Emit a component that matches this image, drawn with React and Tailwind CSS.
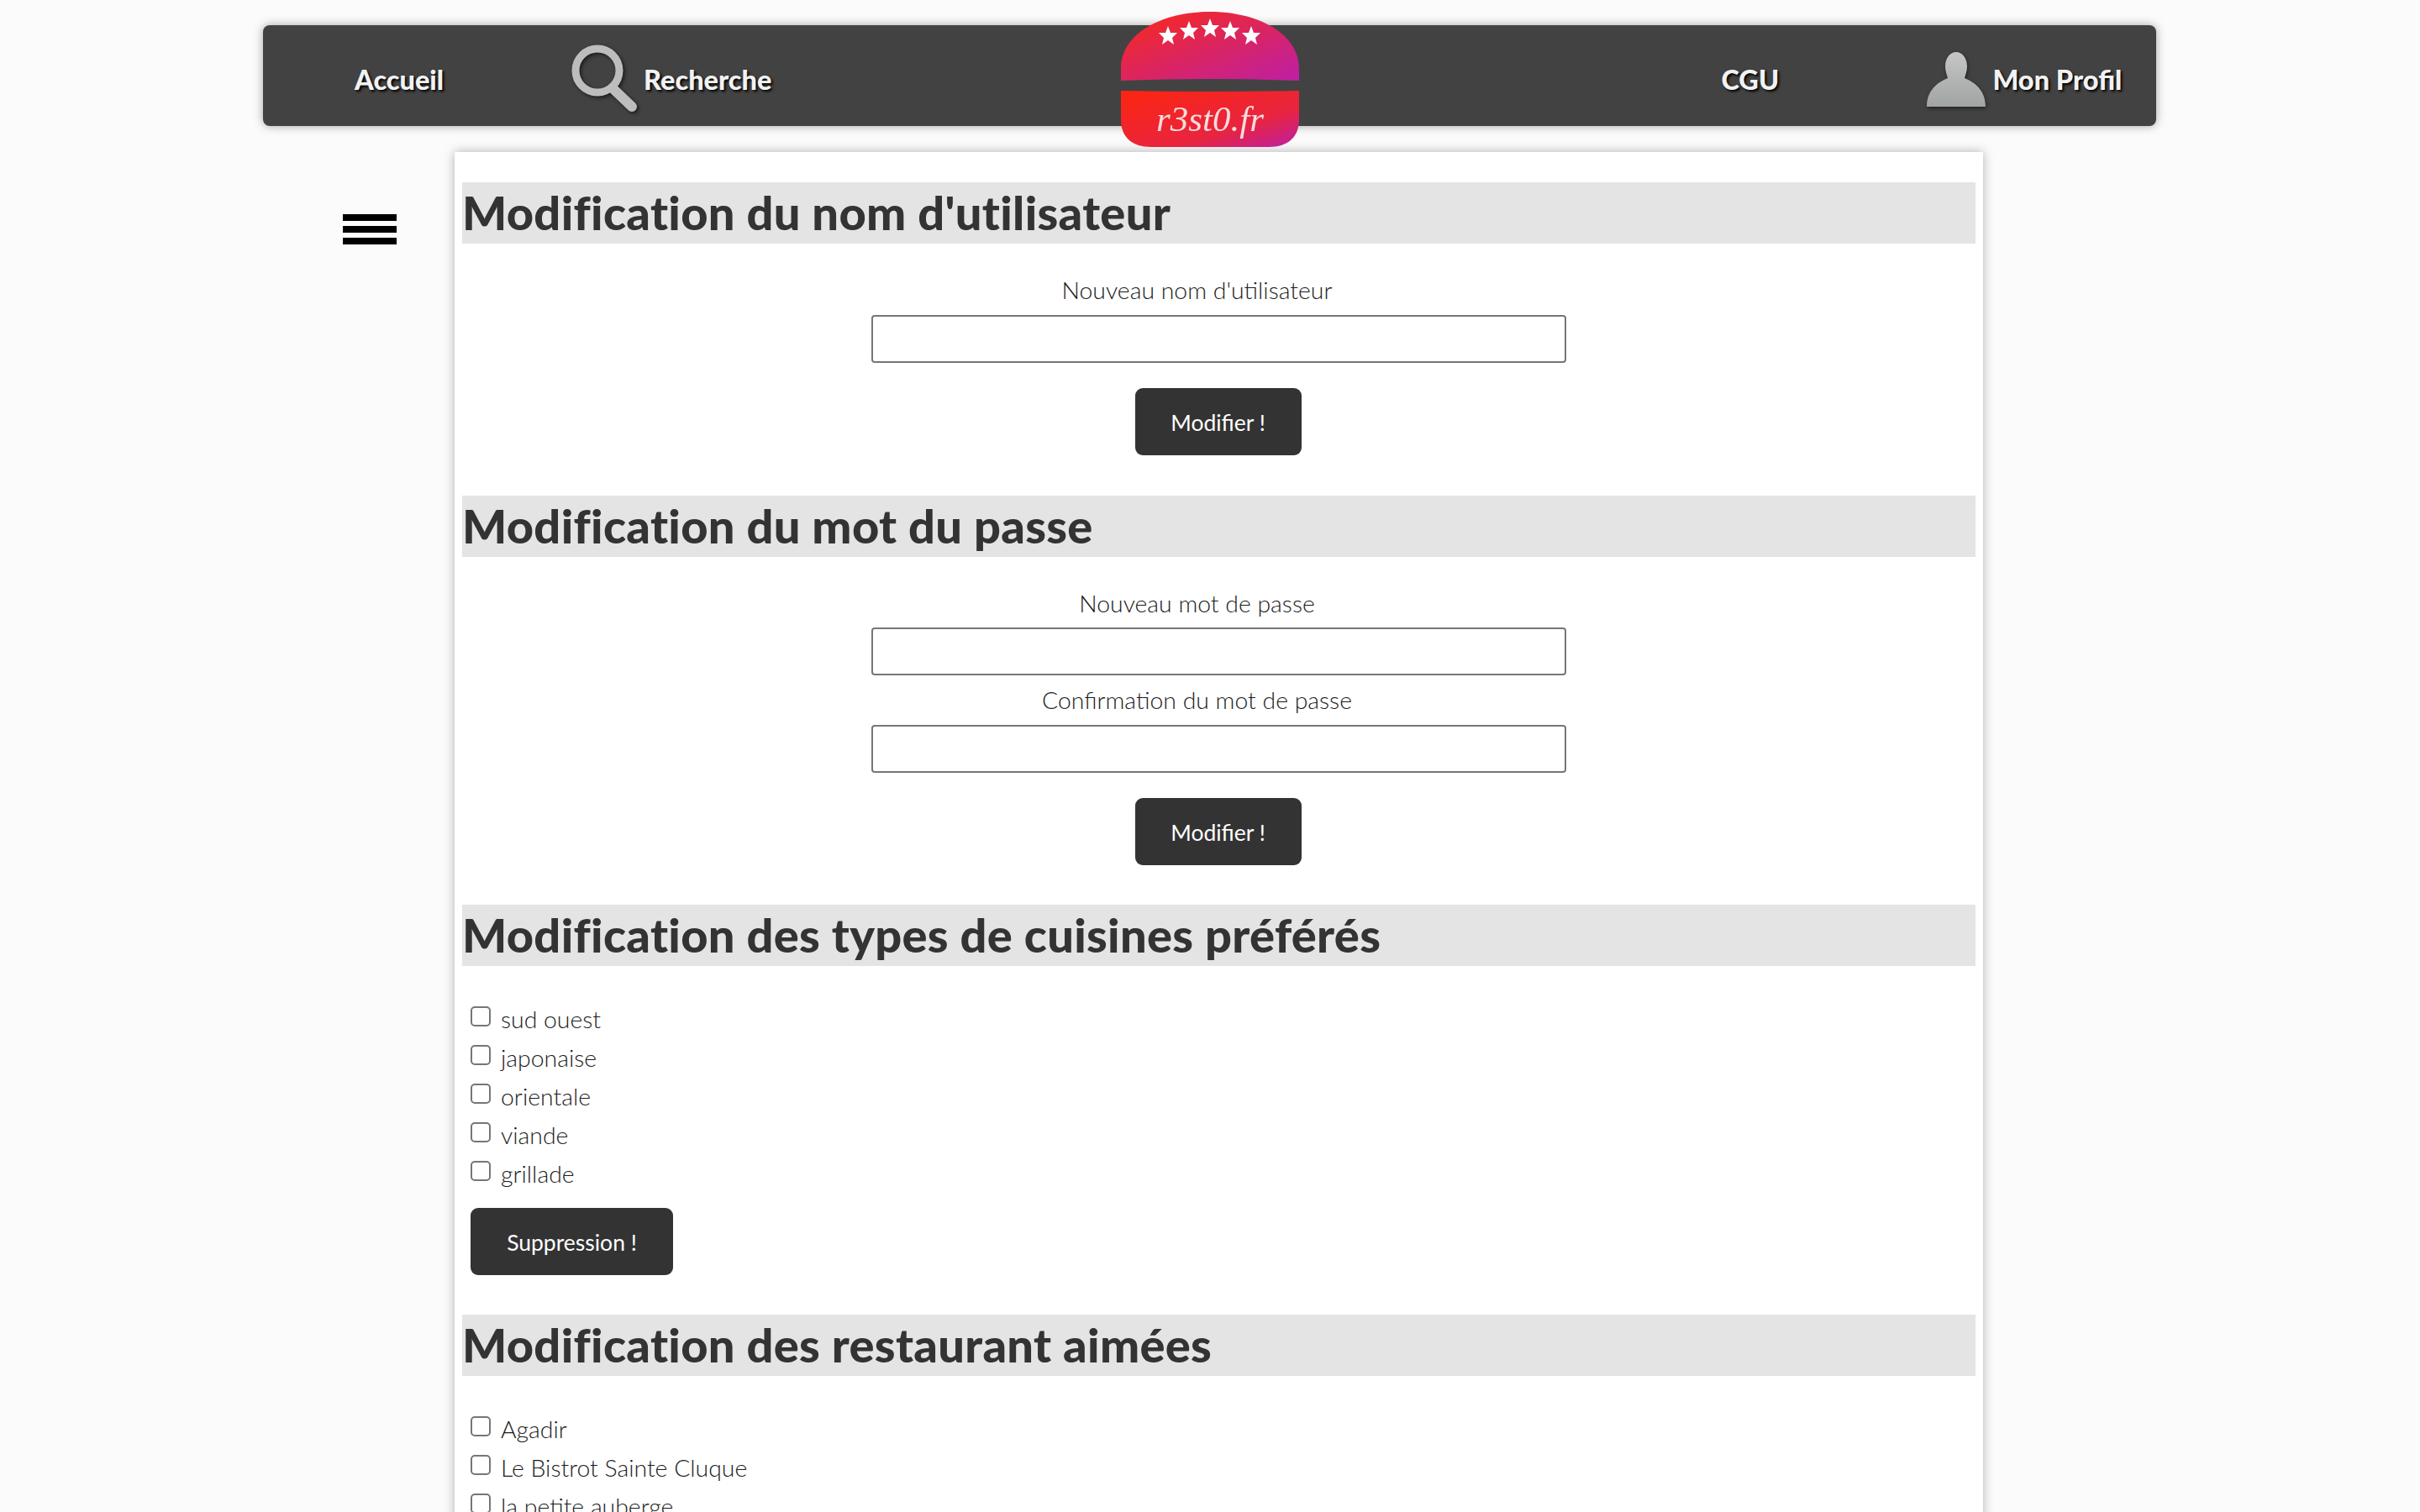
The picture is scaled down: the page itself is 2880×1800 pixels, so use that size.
const cuisines = ['sud ouest', 'japonaise', 'orientale', 'viande', 'grillade'];
const restaurants = ['Agadir', 'Le Bistrot Sainte Cluque', 'la petite auberge'];

const SearchIcon = () => (
  <svg viewBox="0 0 84 84" className="w-[84px] h-[84px] shrink-0 drop-shadow-[2px_2px_2px_rgba(0,0,0,0.6)]">
    <ellipse cx="32" cy="31" rx="26" ry="26" fill="none" stroke="#bdbdbd" strokeWidth="9" />
    <path d="M50 52 L73 74" stroke="#bdbdbd" strokeWidth="12" strokeLinecap="round" />
  </svg>
);

const PersonIcon = () => (
  <svg viewBox="0 0 70 66" className="w-[70px] h-[66px] shrink-0 drop-shadow-[1px_2px_2px_rgba(0,0,0,0.5)]">
    <defs>
      <linearGradient id="person" x1="0" y1="0" x2="0" y2="1">
        <stop offset="0" stopColor="#c6c6c6" />
        <stop offset="1" stopColor="#a0a4a2" />
      </linearGradient>
    </defs>
    <path
      d="M35 0 C43 0 48 8 48 17 C48 23 46 27 45 31 C60 37 70 48 70 65 L0 65 C0 48 10 37 25 31 C24 27 22 23 22 17 C22 8 27 0 35 0 Z"
      fill="url(#person)"
    />
  </svg>
);

const Logo = () => (
  <svg viewBox="0 0 212 161" className="absolute left-[1021px] top-[-16px] w-[212px] h-[161px] blur-[0.5px]">
    <defs>
      <linearGradient id="bun" x1="0" y1="0" x2="1" y2="1">
        <stop offset="0.05" stopColor="#f72a1e" />
        <stop offset="1" stopColor="#bd1fa5" />
      </linearGradient>
      <linearGradient id="bun2" x1="0" y1="0" x2="1" y2="1">
        <stop offset="0.05" stopColor="#fb2512" />
        <stop offset="0.65" stopColor="#e8243f" />
        <stop offset="1" stopColor="#bd1fa5" />
      </linearGradient>
    </defs>
    <path d="M0 82 L0 68 C0 25 50 0 106 0 C162 0 212 25 212 68 L212 82 Q106 78 0 82 Z" fill="url(#bun)" />
    <path d="M0 94 Q106 96 212 94 L212 128 C212 150 198 161 176 161 L36 161 C14 161 0 150 0 128 Z" fill="url(#bun2)" />
    <g fill="#ffffff">
      <polygon points="56,17 59,25 67,25 61,31 63,39 56,34 49,39 51,31 45,25 53,25" />
      <polygon points="81,11 84,19 92,19 86,25 88,33 81,28 74,33 76,25 70,19 78,19" />
      <polygon points="106,8 109,16 117,16 111,22 113,30 106,25 99,30 101,22 95,16 103,16" />
      <polygon points="130,11 133,19 141,19 135,25 137,33 130,28 123,33 125,25 119,19 127,19" />
      <polygon points="155,17 158,25 166,25 160,31 162,39 155,34 148,39 150,31 144,25 152,25" />
    </g>
    <text
      x="106"
      y="142"
      textAnchor="middle"
      fontFamily="'Liberation Serif', serif"
      fontStyle="italic"
      fontWeight="400"
      fontSize="43"
      fill="#f7dcdc"
      className="[text-shadow:none]"
    >
      r3st0.fr
    </text>
  </svg>
);

const Heading = ({ children }) => (
  <h2 className="h-[73px] bg-[#e4e4e4] text-[56px] leading-[71px] font-black text-[#333] tracking-[0.3px] whitespace-nowrap">
    {children}
  </h2>
);

const Field = ({ label, labelClass }) => (
  <div className="w-[827px]">
    <label className={`block pr-[52px] text-center text-[28.4px] font-light leading-[36px] text-[#1c1c1c] ${labelClass}`}>{label}</label>
    <input type="text" className="block w-full h-[57px] bg-white border-2 border-[#767676] rounded-[4px]" />
  </div>
);

const SubmitButton = ({ children, className }) => (
  <button type="button" className={`h-[80px] bg-[#333] rounded-[9px] text-white text-[26.5px] leading-[82px] ${className}`}>
    {children}
  </button>
);

const CheckList = ({ items }) => (
  <div className="pl-[10px]">
    {items.map((item) => (
      <label key={item} className="flex items-start gap-3 h-[46px] text-[28.4px] font-light leading-[44px] text-[#1c1c1c]">
        <input type="checkbox" className="appearance-none w-6 h-6 mt-[7px] bg-white border-2 border-[#767676] rounded-[5px]" />
        {item}
      </label>
    ))}
  </div>
);

export default function App() {
  return (
    <div className="h-[1800px] overflow-hidden bg-[#fbfbfb] pt-[30px] font-['Lato',sans-serif]">
      <nav className="relative ml-[313px] w-[2253px] h-[120px] bg-[#424242] rounded-[8px] shadow-[0_0_12px_rgba(0,0,0,0.35)] flex items-center pl-[109px] pt-[10px] text-[32.5px] font-black text-[#f2f2f2] [text-shadow:2px_2px_3px_#000]">
        <a href="#" className="w-[257px]">Accueil</a>
        <a href="#" className="flex items-center gap-[3px]">
          <SearchIcon />
          Recherche
        </a>
        <Logo />
        <a href="#" className="ml-[1130px] w-[245px]">CGU</a>
        <a href="#" className="flex items-center gap-2">
          <PersonIcon />
          Mon Profil
        </a>
      </nav>

      <div className="flex mt-[31px]">
        <aside className="w-[541px] shrink-0 pl-[408px] pt-[74px]">
          <div className="w-16 flex flex-col gap-[6px]">
            <div className="h-2 bg-black" />
            <div className="h-2 bg-black" />
            <div className="h-2 bg-black" />
          </div>
        </aside>

        <main className="w-[1819px] bg-white shadow-[0_0_12px_rgba(0,0,0,0.3)] px-[9px] pt-[36px]">
          <Heading>Modification du nom d'utilisateur</Heading>
          <div className="flex flex-col items-center pt-[37px] pb-[48px]">
            <Field label="Nouveau nom d'utilisateur" labelClass="mb-3" />
            <SubmitButton className="w-[198px] mt-[30px] mr-[2px]">Modifier !</SubmitButton>
          </div>

          <Heading>Modification du mot du passe</Heading>
          <div className="flex flex-col items-center pt-[37px] pb-[47px]">
            <Field label="Nouveau mot de passe" labelClass="mb-[11px]" />
            <div className="mt-[11px]">
              <Field label="Confirmation du mot de passe" labelClass="mb-[12px]" />
            </div>
            <SubmitButton className="w-[198px] mt-[30px] mr-[2px]">Modifier !</SubmitButton>
          </div>

          <Heading>Modification des types de cuisines préférés</Heading>
          <div className="pt-[41px] pb-[47px]">
            <CheckList items={cuisines} />
            <SubmitButton className="w-[241px] ml-[10px] mt-[17px]">Suppression !</SubmitButton>
          </div>

          <Heading>Modification des restaurant aimées</Heading>
          <div className="pt-[41px]">
            <CheckList items={restaurants} />
          </div>
        </main>
      </div>
    </div>
  );
}
